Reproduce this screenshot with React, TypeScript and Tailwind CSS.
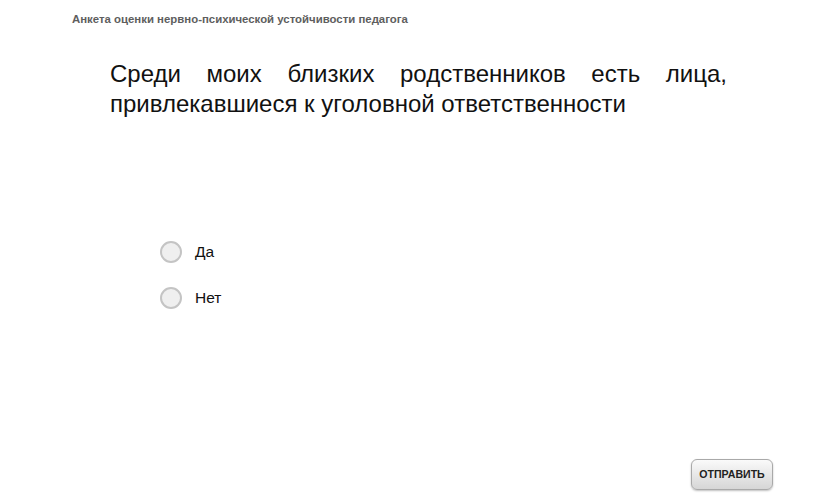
import { useState } from 'react'

export default function App() {
  const [answer, setAnswer] = useState<string | null>(null)
  const options = ['Да', 'Нет']

  return (
    <div className="relative h-[504px] w-[840px] overflow-hidden bg-white font-['Liberation_Sans',Arial,sans-serif]">
      {/* Header */}
      <div className="px-[72px] pt-[13px] text-[11.4px] font-bold leading-[12px] text-[#5e5e5e]">
        Анкета оценки нервно-психической устойчивости педагога
      </div>

      {/* Question */}
      <div className="pl-[110px] pr-[113px] pt-[34px]">
        <p className="text-justify text-[24px] leading-[30px] text-[#111] [text-align-last:left]">
          Среди моих близких родственников есть лица, привлекавшиеся к уголовной ответственности
        </p>
      </div>

      {/* Options */}
      <div className="mt-[121px] flex flex-col gap-[23px] pl-[160px]">
        {options.map(opt => (
          <label key={opt} className="flex cursor-pointer items-center gap-[13px]">
            <span
              onClick={() => setAnswer(opt)}
              className="flex h-[22px] w-[22px] items-center justify-center rounded-full border-2 border-[#c4c4c4] bg-[#efefef]"
            >
              {answer === opt && <span className="h-[10px] w-[10px] rounded-full bg-[#555]" />}
            </span>
            <span className="text-[15.5px] text-[#111]">{opt}</span>
          </label>
        ))}
      </div>

      {/* Submit */}
      <div className="absolute bottom-[14px] right-[67px]">
        <button className="h-[31px] w-[82px] rounded-[6px] border border-[#a9a9a9] bg-gradient-to-b from-[#fafafa] to-[#d6d6d6] text-[10.6px] font-bold text-[#222] shadow-[0_1px_2px_rgba(0,0,0,0.25)]">
          ОТПРАВИТЬ
        </button>
      </div>
    </div>
  )
}
